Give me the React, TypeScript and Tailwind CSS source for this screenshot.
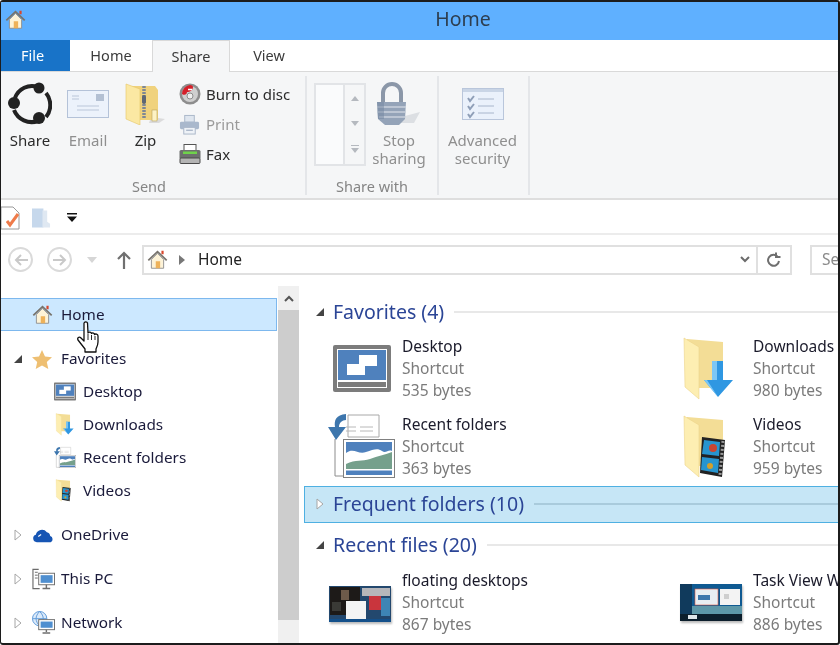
import type { ReactNode } from "react";

type IconProps = { className?: string };

function HomeIcon({ className }: IconProps) {
  return (
    <svg viewBox="0 0 24 24" className={className}>
      <rect x="16.500" y="2" width="2.500" height="4" fill="#d9472b" />
      <path d="M5 12v10h14V12L12 5z" fill="#fdf3d8" stroke="#8a8a8a" strokeWidth="1" />
      <rect x="10" y="14" width="5" height="8" fill="#eeb25a" />
      <path d="M1.500 13 12 3l10.500 10" fill="none" stroke="#77736c" strokeWidth="2" />
    </svg>
  );
}

function ShareIcon({ className }: IconProps) {
  return (
    <svg viewBox="0 0 44 44" className={className}>
      <path d="M7 16A18 18 0 0 1 30 5M38 11a19 19 0 0 1 0 24M30 39A19 19 0 0 1 6 28" fill="none" stroke="#222" strokeWidth="4" />
      <circle cx="31" cy="6" r="5.500" fill="#222" />
      <circle cx="6" cy="21" r="6" fill="#222" />
      <circle cx="31" cy="36" r="6" fill="#222" />
    </svg>
  );
}

function MailIcon({ className }: IconProps) {
  return (
    <svg viewBox="0 0 42 28" className={className}>
      <rect x="0.500" y="0.500" width="41" height="27" fill="#ecf2fb" stroke="#b4c2d8" />
      <rect x="29" y="4" width="8" height="7" fill="#b3c0d3" />
      <path d="M5 6h7M5 9h7M10 16h22M10 20h22" stroke="#b9c6da" strokeWidth="1.200" />
    </svg>
  );
}

function ZipIcon({ className }: IconProps) {
  return (
    <svg viewBox="0 0 42 42" className={className}>
      <path d="M26 34l14 2-6 4H24z" fill="#c9c9c9" opacity="0.600" />
      <path d="M6 3h24l3 4v30H6z" fill="#f0d27d" />
      <path d="M1 1l14 5v36L1 36z" fill="#fbe8a3" stroke="#e5c666" strokeWidth="0.600" />
      <path d="M19 3v32" stroke="#7f8794" strokeWidth="3.500" strokeDasharray="2 1" />
      <rect x="17" y="12" width="4" height="9" rx="2" fill="#5e6673" />
      <rect x="27" y="27" width="5" height="11" fill="#fdf2c4" stroke="#b9a35e" strokeWidth="0.600" />
    </svg>
  );
}

function DiscIcon({ className }: IconProps) {
  return (
    <svg viewBox="0 0 22 22" className={className}>
      <circle cx="11" cy="11" r="10.500" fill="#8d8d8d" />
      <circle cx="11" cy="11" r="8" fill="#cfcfcf" />
      <path d="M11 2a9 9 0 0 0-8 9c3 2 5 0 5-2 3 0 6-2 6-5 0-1-1-2-3-2z" fill="#d4202a" />
      <circle cx="11" cy="13" r="3" fill="#efefef" stroke="#8d8d8d" />
      <path d="M9 6.500h4" stroke="#fff" strokeWidth="1.500" />
    </svg>
  );
}

function PrintIcon({ className }: IconProps) {
  return (
    <svg viewBox="0 0 22 22" className={className}>
      <rect x="6" y="1.500" width="10" height="7" fill="#dfe6ef" stroke="#a9b6c8" />
      <rect x="1" y="8" width="20" height="8" rx="1.500" fill="#a9b8cc" />
      <rect x="5" y="14" width="12" height="7" fill="#eef2f7" stroke="#a9b6c8" />
      <path d="M7.500 17h7" stroke="#8fa0b6" />
    </svg>
  );
}

function FaxIcon({ className }: IconProps) {
  return (
    <svg viewBox="0 0 22 20" className={className}>
      <rect x="5" y="0.500" width="12" height="7" fill="#fff" stroke="#555" />
      <rect x="0.500" y="6" width="21" height="9" rx="1.500" fill="#6d6f6e" />
      <rect x="4" y="7.500" width="14" height="2.500" fill="#6fd24b" />
      <rect x="1" y="14" width="20" height="5.500" rx="1" fill="#b4b4b4" stroke="#4a4a4a" />
    </svg>
  );
}

function LockIcon({ className }: IconProps) {
  return (
    <svg viewBox="0 0 44 44" className={className}>
      <path d="M28 34l15-4-6 11H22z" fill="#dcdfe3" />
      <path d="M6 20V11a9 9 0 0 1 18 0v9" fill="none" stroke="#8b97a8" strokeWidth="4" />
      <path d="M0 20h29l-1 17-6 6H8l-7-6z" fill="#94a3b8" />
      <path d="M0 25h29M0 30h29M2 35h26" stroke="#c9d1dc" strokeWidth="1.500" />
      <path d="M0 20h7v17l-6 0z" fill="#7285a0" opacity="0.500" />
    </svg>
  );
}

function SecurityIcon({ className }: IconProps) {
  return (
    <svg viewBox="0 0 42 32" className={className}>
      <rect x="0.500" y="0.500" width="41" height="31" fill="#eaf1fb" stroke="#b9c6db" />
      <rect x="1" y="1" width="40" height="3" fill="#c9d5e6" />
      <path d="M6 10l2 3 4-5M6 18l2 3 4-5M6 26l2 3 4-5" fill="none" stroke="#8f9fb8" strokeWidth="2" />
      <path d="M16 11h16M16 18h16M16 25h16" stroke="#a8b6cc" strokeWidth="1" />
    </svg>
  );
}

function DesktopIcon({ className }: IconProps) {
  return (
    <svg viewBox="0 0 58 47" className={className}>
      <rect width="58" height="47" rx="2" fill="#7c7c7c" />
      <rect x="4" y="4" width="50" height="39" fill="#fff" />
      <rect x="5" y="5" width="48" height="30" fill="#4f81bd" />
      <rect x="5" y="37" width="48" height="5" fill="#7c7c7c" />
      <rect x="26" y="10" width="18" height="11" fill="#fff" />
      <rect x="14" y="19" width="18" height="11" fill="#fff" />
    </svg>
  );
}

function RecentIcon({ className }: IconProps) {
  return (
    <svg viewBox="0 0 67 66" className={className}>
      <path d="M20 2h31v22H20z" fill="#fff" stroke="#a8a8a8" />
      <path d="M7 26v37h16" fill="none" stroke="#8c8c8c" strokeWidth="1" />
      <path d="M18 14h10M18 18h10M32 14h13M32 18h13" stroke="#b8b8b8" strokeWidth="1" />
      <path d="M18 1C8 2 6 7 7 14H0l8 13 10-13h-7c0-4 3-7 7-7z" fill="#3d76ad" />
      <rect x="15.500" y="26.500" width="51" height="38" fill="#fff" stroke="#808080" />
      <rect x="18" y="29" width="46" height="33" fill="#4f81bd" />
      <path d="M18 40c8-6 12 2 20-1s12-4 16-1 6-2 10 0v18H18z" fill="#fff" />
      <path d="M18 51c10-5 16-2 24-5s14-4 22-7v17H18z" fill="#75a08c" />
      <rect x="18" y="56" width="46" height="1.500" fill="#fff" />
    </svg>
  );
}

function FolderIcon({ className, children }: IconProps & { children?: ReactNode }) {
  return (
    <svg viewBox="0 0 52 64" className={className}>
      <path d="M4 2l36 3v46H4z" fill="#f3dd96" />
      <path d="M1 1l15 9v52L2 50z" fill="#fdeeb2" stroke="#ecd489" strokeWidth="0.600" />
      {children}
    </svg>
  );
}

function DownloadsIcon({ className }: IconProps) {
  return (
    <FolderIcon className={className}>
      <path d="M29 24h11v19h10L35 60 21 43h8z" fill="#2f97e2" />
      <path d="M29 24h5v19H24l11 17-14-17h8z" fill="#7cc7f5" />
    </FolderIcon>
  );
}

function VideosIcon({ className }: IconProps) {
  return (
    <FolderIcon className={className}>
      <path d="M19 22l23 3-3 37-22-4z" fill="#222" />
      <path d="M21 25l16 2-1 14-17-2zM19 42l17 2-1 14-17-3z" fill="#2795cf" />
      <circle cx="30" cy="33" r="4" fill="#c84632" />
      <circle cx="27" cy="51" r="3" fill="#d4a02a" />
      <path d="M40 26l-3 34" stroke="#9a9a9a" strokeWidth="3" strokeDasharray="2 2" />
    </FolderIcon>
  );
}

function OneDriveIcon({ className }: IconProps) {
  return (
    <svg viewBox="0 0 24 16" className={className}>
      <path d="M5 15.500a4 4 0 0 1-1-7.800A6.500 6.500 0 0 1 15.500 5a4.500 4.500 0 0 1 3.500 4 3.500 3.500 0 0 1 .5 6.500z" fill="#1655b4" />
      <path d="M6.500 9.500l3-2" stroke="#fff" strokeWidth="1.200" />
    </svg>
  );
}

function ThisPcIcon({ className }: IconProps) {
  return (
    <svg viewBox="0 0 24 22" className={className}>
      <path d="M7 1H1v20h7" fill="none" stroke="#6b6b6b" strokeWidth="1.200" />
      <path d="M3 4h3M3 7h3M3 10h3" stroke="#6b6b6b" />
      <rect x="7" y="5" width="16.500" height="12" fill="#fff" stroke="#6e6e6e" />
      <rect x="9" y="7" width="12.500" height="8" fill="#4f8fd0" />
      <path d="M15 17v3M11 21h8" stroke="#6e6e6e" strokeWidth="1.500" />
    </svg>
  );
}

function NetworkIcon({ className }: IconProps) {
  return (
    <svg viewBox="0 0 24 24" className={className}>
      <circle cx="8" cy="8" r="7.500" fill="#dbeafa" stroke="#5f9ad8" />
      <path d="M0.500 8h15M8 0.500c-5 5-5 10 0 15M8 0.500c5 5 5 10 0 15" fill="none" stroke="#5f9ad8" />
      <rect x="7" y="9" width="16.500" height="10.500" fill="#fff" stroke="#6e6e6e" />
      <rect x="9" y="11" width="12.500" height="6.500" fill="#4f8fd0" />
      <path d="M15 19.500v2.500M11 23h8" stroke="#6e6e6e" strokeWidth="1.500" />
    </svg>
  );
}

function FloatingThumb({ className }: IconProps) {
  return (
    <svg viewBox="0 0 62 36" className={className}>
      <rect width="62" height="36" fill="#23486e" />
      <rect x="1" y="1" width="30" height="28" fill="#1d1a18" />
      <rect x="12" y="4" width="8" height="10" fill="#6d5a4a" />
      <rect x="3" y="16" width="9" height="9" fill="#3a3a36" />
      <rect x="33" y="2" width="28" height="8" fill="#b6b6ba" />
      <rect x="40" y="10" width="12" height="14" fill="#c9353d" />
      <rect x="52" y="12" width="9" height="18" fill="#3e85b5" />
      <rect x="17" y="15" width="20" height="18" fill="#f4f4f4" />
      <rect x="0" y="33" width="62" height="3" fill="#14508a" />
    </svg>
  );
}

function TaskViewThumb({ className }: IconProps) {
  return (
    <svg viewBox="0 0 62 37" className={className}>
      <rect width="62" height="37" fill="#0f5a92" />
      <rect y="22" width="62" height="8" fill="#5d97a8" />
      <rect width="12" height="30" fill="#103a5c" />
      <rect x="15" y="5" width="23" height="16" fill="#e8eef2" stroke="#e05a40" strokeWidth="0.600" />
      <rect x="18" y="11" width="12" height="5" fill="#3e78ac" />
      <rect x="40" y="5" width="20" height="16" fill="#f3f3f3" />
      <rect x="44" y="10" width="5" height="5" fill="#cfcfcf" />
      <rect y="30" width="62" height="7" fill="#0c1e2c" />
      <rect x="8" y="31" width="9" height="4" fill="#dfe6ea" />
    </svg>
  );
}

function Triangle({ open }: { open?: boolean }) {
  if (open) {
    return (
      <svg viewBox="0 0 8 8" className="w-2 h-2">
        <path d="M8 0v8H0z" fill="#444" />
      </svg>
    );
  }
  return (
    <svg viewBox="0 0 8 12" className="w-2 h-3">
      <path d="M1 1l6 5-6 5z" fill="#fff" stroke="#a6a6a6" />
    </svg>
  );
}

function LargeButton({ width, icon, lines, muted }: { width: string; icon: ReactNode; lines: string[]; muted?: boolean }) {
  return (
    <div className={`flex flex-col items-center ${width}`}>
      <div className="h-[48px] mt-[4px] flex items-center justify-center">{icon}</div>
      <div className={`mt-[3px] text-[15px] leading-[18px] text-center ${muted ? "text-[#8f8f8f]" : "text-[#2b2b2b]"}`}>
        {lines.map((l) => (
          <div key={l}>{l}</div>
        ))}
      </div>
    </div>
  );
}

function SmallButton({ icon, label, muted }: { icon: ReactNode; label: string; muted?: boolean }) {
  return (
    <div className="h-[30px] flex items-center">
      <div className="w-[27px] flex items-center">{icon}</div>
      <span className={`text-[15px] whitespace-nowrap ${muted ? "text-[#9a9a9a]" : "text-[#2b2b2b]"}`}>{label}</span>
    </div>
  );
}

function RibbonGroup({ width, label, labelClass, children }: { width: string; label: string; labelClass?: string; children: ReactNode }) {
  return (
    <div className={`${width} shrink-0 h-[119px] mt-[4px] flex flex-col border-r-2 border-[#e4e6e9]`}>
      <div className="h-[101px] flex items-start">{children}</div>
      <div className={`text-center text-[14.5px] leading-[18px] text-[#858585] ${labelClass ?? ""}`}>{label}</div>
    </div>
  );
}

function TreeRow({ icon, label, arrow, open, indent, selected, className }: { icon: ReactNode; label: string; arrow?: boolean; open?: boolean; indent?: boolean; selected?: boolean; className?: string }) {
  return (
    <div className={`h-[33px] flex items-center text-[15.3px] text-[#1a1a3a] ${selected ? "bg-[#cce8ff] border border-l-0 border-[#7db8ee] w-[276px]" : ""} ${className ?? ""}`}>
      <div className="w-[31px] pl-[13px] flex items-center shrink-0">{arrow && <Triangle open={open} />}</div>
      {indent && <div className="w-[22px] shrink-0" />}
      <div className="w-[29px] flex items-center shrink-0">{icon}</div>
      <span className="whitespace-nowrap">{label}</span>
    </div>
  );
}

function GroupHeader({ label, open, band, className }: { label: string; open?: boolean; band?: boolean; className?: string }) {
  return (
    <div className={`flex items-center ${band ? "h-[37px] ml-[4px] pl-[11px] pb-[2px] bg-[#c6e6f6] border border-r-0 border-[#4eb0e2]" : "h-[24px] pl-[16px]"} ${className ?? ""}`}>
      <div className="w-[17px] flex items-center shrink-0">
        <Triangle open={open} />
      </div>
      <span className="text-[19.500px] leading-[24px] text-[#2b4596] whitespace-nowrap">{label}</span>
      <div className={`flex-1 h-[2px] ml-[10px] ${band ? "bg-[#a9cbdc]" : "bg-[#e8e8e8]"}`} />
    </div>
  );
}

function FileItem({ icon, name, size }: { icon: ReactNode; name: string; size: string }) {
  return (
    <div className="w-[351px] h-[78px] flex shrink-0">
      <div className="w-[102px] pl-[28px] flex items-start shrink-0">{icon}</div>
      <div className="text-[15.500px] leading-[22px] whitespace-nowrap">
        <div className="text-[#1a1a2a]">{name}</div>
        <div className="text-[#7b7b7b]">Shortcut</div>
        <div className="text-[#7b7b7b]">{size}</div>
      </div>
    </div>
  );
}

export default function App() {
  return (
    <div className="w-[840px] h-[645px] overflow-hidden bg-white border-t-2 border-l border-r-2 border-b-2 border-[#1c1c1c] rounded-[3px] blur-[0.35px] font-['Noto_Sans','Open_Sans',sans-serif] flex flex-col">
      {/* Title bar */}
      <div className="h-[38px] pb-[4px] bg-[#5fb0ff] shrink-0 flex items-center">
        <HomeIcon className="w-[21px] h-[21px] ml-[4px]" />
        <div className="flex-1 text-center text-[19.500px] text-[#2d3e50] pr-[26px] pl-[88px]">Home</div>
      </div>

      {/* Tabs */}
      <div className="h-[32px] shrink-0 flex bg-white border-b border-[#d9d9d9] text-[14.500px]">
        <div className="w-[69px] pr-[6px] pt-[1px] bg-[#1873c8] text-white flex items-center justify-center">File</div>
        <div className="w-[82px] pt-[1px] text-[#3b3b3b] flex items-center justify-center">Home</div>
        <div className="w-[78px] h-[32px] pt-[1px] bg-[#f5f6f7] border border-b-0 border-[#d9d9d9] text-[#3b3b3b] flex items-center justify-center">Share</div>
        <div className="w-[78px] pt-[1px] text-[#3b3b3b] flex items-center justify-center">View</div>
      </div>

      {/* Ribbon */}
      <div className="h-[128px] shrink-0 flex bg-[#f5f6f7] border-b-2 border-[#dedede]">
        <RibbonGroup width="w-[306px]" label="Send" labelClass="pr-[8px]">
          <LargeButton width="w-[58px]" icon={<ShareIcon className="w-[44px] h-[44px]" />} lines={["Share"]} />
          <LargeButton width="w-[58px]" icon={<MailIcon className="w-[42px] h-[28px]" />} lines={["Email"]} muted />
          <LargeButton width="w-[57px]" icon={<ZipIcon className="w-[42px] h-[42px]" />} lines={["Zip"]} />
          <div className="ml-[5px] mt-[3px] flex flex-col">
            <SmallButton icon={<DiscIcon className="w-[22px] h-[22px]" />} label="Burn to disc" />
            <SmallButton icon={<PrintIcon className="w-[21px] h-[21px]" />} label="Print" muted />
            <SmallButton icon={<FaxIcon className="w-[22px] h-[20px]" />} label="Fax" />
          </div>
        </RibbonGroup>
        <RibbonGroup width="w-[132px]" label="Share with">
          <div className="ml-[7px] mt-[7px] w-[52px] h-[83px] flex border-2 border-[#e2e4e7] bg-[#fafbfc]">
            <div className="w-[29px] border-r-2 border-[#e2e4e7]" />
            <div className="flex-1 bg-[#f5f6f7] flex flex-col items-center justify-between py-[11px] text-[#b5b9bf]">
              <svg viewBox="0 0 8 5" className="w-2 h-[5px]"><path d="M4 0l4 5H0z" fill="currentColor" /></svg>
              <svg viewBox="0 0 8 5" className="w-2 h-[5px]"><path d="M4 5l4-5H0z" fill="currentColor" /></svg>
              <svg viewBox="0 0 8 8" className="w-2 h-2"><path d="M0 0h8v1H0zM4 8l4-5H0z" fill="currentColor" /></svg>
            </div>
          </div>
          <LargeButton width="w-[66px]" icon={<LockIcon className="w-[44px] h-[44px]" />} lines={["Stop", "sharing"]} muted />
        </RibbonGroup>
        <RibbonGroup width="w-[91px]" label="">
          <LargeButton width="w-full pr-[2px]" icon={<SecurityIcon className="w-[42px] h-[32px]" />} lines={["Advanced", "security"]} muted />
        </RibbonGroup>
      </div>

      {/* Quick access */}
      <div className="h-[35px] pt-[2px] shrink-0 flex items-center border-b-2 border-[#ececec]">
        <svg viewBox="0 0 20 24" className="w-[20px] h-[24px] ml-[-1px]">
          <path d="M1 1h12l6 6v16H1z" fill="#fff" stroke="#9a9a9a" />
          <path d="M7 15l3 4 8-11" fill="none" stroke="#ef7b4a" strokeWidth="3" />
        </svg>
        <svg viewBox="0 0 20 22" className="w-[19px] h-[22px] ml-[12px]">
          <path d="M0 1h12v20H0z" fill="#c6d8ec" />
          <path d="M11 3h5v12l3 2v4h-8z" fill="#dfe8f2" />
        </svg>
        <svg viewBox="0 0 10 9" className="w-[10px] h-[9px] ml-[16px]">
          <path d="M0 0h10v1.500H0zM0 3.500h10L5 9z" fill="#111" />
        </svg>
      </div>

      {/* Address row */}
      <div className="h-[40px] pt-[9px] shrink-0 flex items-center">
        <div className="w-[25px] h-[25px] ml-[7px] rounded-full border-2 border-[#dadada] flex items-center justify-center shrink-0">
          <svg viewBox="0 0 14 12" className="w-[14px] h-[12px]"><path d="M7 1L2 6l5 5M2 6h12" fill="none" stroke="#c9c9c9" strokeWidth="2" /></svg>
        </div>
        <div className="w-[25px] h-[25px] ml-[14px] rounded-full border-2 border-[#dadada] flex items-center justify-center shrink-0">
          <svg viewBox="0 0 14 12" className="w-[14px] h-[12px]"><path d="M7 1l5 5-5 5M12 6H0" fill="none" stroke="#c9c9c9" strokeWidth="2" /></svg>
        </div>
        <svg viewBox="0 0 10 6" className="w-[10px] h-[6px] ml-[15px] shrink-0"><path d="M0 0h10L5 6z" fill="#d6d6d6" /></svg>
        <svg viewBox="0 0 14 18" className="w-[14px] h-[18px] ml-[20px] shrink-0"><path d="M1 8l6-6 6 6M7 2v16" fill="none" stroke="#707070" strokeWidth="2.200" /></svg>
        <div className="w-[650px] h-[30px] ml-[11px] flex items-center border-2 border-[#e0e0e0] shrink-0">
          <HomeIcon className="w-[21px] h-[21px] ml-[3px]" />
          <svg viewBox="0 0 6 10" className="w-[6px] h-[10px] ml-[11px]"><path d="M0 0l6 5-6 5z" fill="#777" /></svg>
          <span className="ml-[13px] text-[15.500px] text-[#222]">Home</span>
          <div className="flex-1" />
          <svg viewBox="0 0 10 7" className="w-[10px] h-[7px] mr-[6px]"><path d="M1 1l4 4 4-4" fill="none" stroke="#6b6b6b" strokeWidth="2" /></svg>
          <div className="w-[34px] h-full border-l-2 border-[#e0e0e0] flex items-center justify-center">
            <svg viewBox="0 0 14 15" className="w-[14px] h-[15px]"><path d="M11 5a5.500 5.500 0 1 0 1 4M9 .5V5h4.500" fill="none" stroke="#6f6f6f" strokeWidth="2" /></svg>
          </div>
        </div>
        <div className="w-[40px] h-[30px] ml-[18px] pl-[10px] flex items-center border-2 border-r-0 border-[#e0e0e0] text-[15.500px] text-[#8a8a8a] overflow-hidden shrink-0">Se</div>
      </div>

      {/* Main */}
      <div className="flex-1 flex min-h-0 relative">
        <div className="w-[277px] shrink-0 pt-[23px]">
          <TreeRow selected icon={<HomeIcon className="w-[21px] h-[21px]" />} label="Home" className="mb-[11px]" />
          <TreeRow arrow open icon={<svg viewBox="0 0 20 20" className="w-[20px] h-[20px]"><path d="M10 1l3 6.500 7 .8-5.200 4.700 1.500 7L10 16.500 3.700 20l1.500-7L0 8.300l7-.8z" fill="#eebf72" /></svg>} label="Favorites" />
          <TreeRow indent icon={<DesktopIcon className="w-[22px] h-[19px]" />} label="Desktop" />
          <TreeRow indent icon={<DownloadsIcon className="w-[22px] h-[23px]" />} label="Downloads" />
          <TreeRow indent icon={<RecentIcon className="w-[22px] h-[23px]" />} label="Recent folders" />
          <TreeRow indent icon={<VideosIcon className="w-[22px] h-[23px]" />} label="Videos" className="mb-[11px]" />
          <TreeRow arrow icon={<OneDriveIcon className="w-[23px] h-[16px]" />} label="OneDrive" className="mb-[11px]" />
          <TreeRow arrow icon={<ThisPcIcon className="w-[23px] h-[22px]" />} label="This PC" className="mb-[11px]" />
          <TreeRow arrow icon={<NetworkIcon className="w-[23px] h-[23px]" />} label="Network" />
        </div>

        {/* Hand cursor over the selected row */}
        <svg viewBox="0 0 23 32" className="absolute left-[76px] top-[46px] w-[23px] h-[32px]">
          <path d="M7 2c1-1.500 3-1.500 3.500 0l.5 10c1-1.500 3-1 3.500.5 1-1 3-.5 3 1 1-1 3.500-.5 3.500 1.500v6c0 3-1 5-2 7v3H8v-3L1 19c-1-2 1-4 3-2l3 3z" fill="#fff" stroke="#111" strokeWidth="1.300" strokeLinejoin="round" />
          <path d="M11 13v6M14.500 14v5M18 15v4" stroke="#111" strokeWidth="0.900" />
        </svg>

        {/* Scrollbar */}
        <div className="w-[21px] shrink-0 mt-[11px] bg-[#f0f0f0] flex flex-col">
          <div className="h-[24px] flex items-center justify-center">
            <svg viewBox="0 0 10 7" className="w-[10px] h-[7px]"><path d="M1 6l4-4 4 4" fill="none" stroke="#555" strokeWidth="2" /></svg>
          </div>
          <div className="h-[310px] bg-[#cdcdcd]" />
        </div>

        {/* Content */}
        <div className="flex-1 min-w-0 pt-[25px] pl-[1px] overflow-hidden">
          <GroupHeader label="Favorites (4)" open />
          <div className="mt-[11px] flex w-[702px]">
            <FileItem icon={<DesktopIcon className="w-[58px] h-[47px] mt-[10px] ml-[5px]" />} name="Desktop" size="535 bytes" />
            <FileItem icon={<DownloadsIcon className="w-[52px] h-[64px] mt-[2px] ml-[4px]" />} name="Downloads" size="980 bytes" />
          </div>
          <div className="flex w-[702px]">
            <FileItem icon={<RecentIcon className="w-[67px] h-[66px]" />} name="Recent folders" size="363 bytes" />
            <FileItem icon={<VideosIcon className="w-[52px] h-[64px] mt-[2px] ml-[4px]" />} name="Videos" size="959 bytes" />
          </div>
          <GroupHeader band label="Frequent folders (10)" className="-mt-[5px]" />
          <GroupHeader label="Recent files (20)" open className="mt-[10px]" />
          <div className="mt-[12px] flex w-[702px]">
            <FileItem icon={<FloatingThumb className="w-[62px] h-[36px] mt-[17px] ml-[1px] shadow-[1px_2px_2px_#bbb]" />} name="floating desktops" size="867 bytes" />
            <FileItem icon={<TaskViewThumb className="w-[62px] h-[37px] mt-[15px] ml-[1px] shadow-[1px_2px_2px_#bbb]" />} name="Task View Windows" size="886 bytes" />
          </div>
        </div>
      </div>
    </div>
  );
}
